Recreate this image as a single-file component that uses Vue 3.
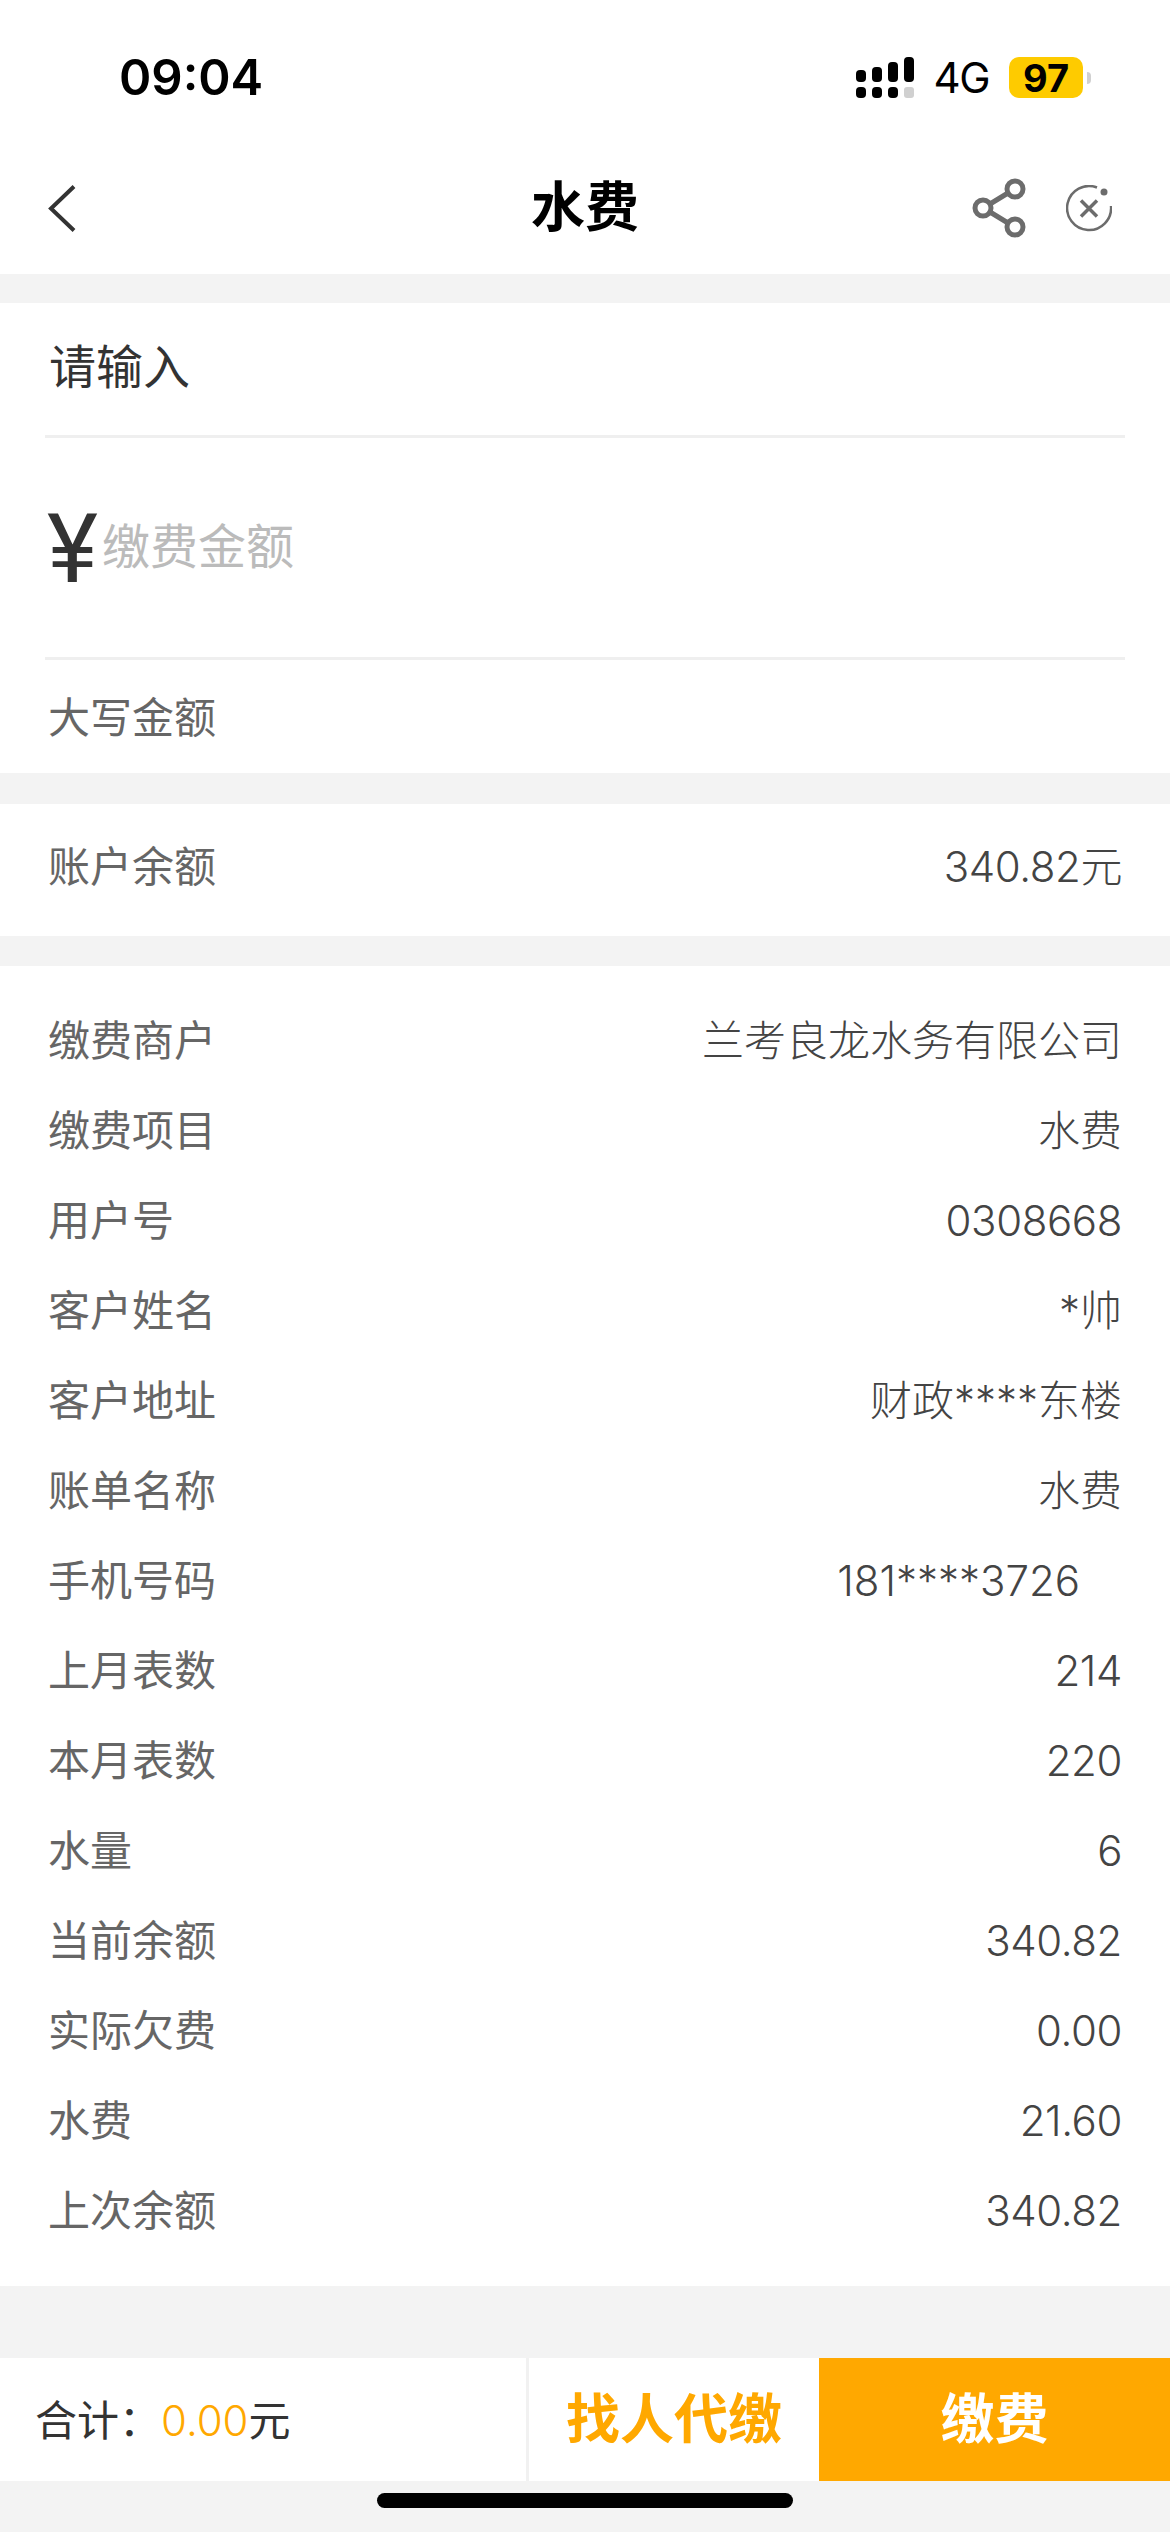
<script setup>
const rows = [
  ['缴费商户', '兰考良龙水务有限公司'],
  ['缴费项目', '水费'],
  ['用户号', '0308668', 'num'],
  ['客户姓名', '*帅'],
  ['客户地址', '财政****东楼'],
  ['账单名称', '水费'],
  ['手机号码', '181****3726', 'phone'],
  ['上月表数', '214', 'num'],
  ['本月表数', '220', 'num'],
  ['水量', '6', 'num'],
  ['当前余额', '340.82', 'num'],
  ['实际欠费', '0.00', 'num'],
  ['水费', '21.60', 'num'],
  ['上次余额', '340.82', 'num']
]
</script>

<template>
  <div class="page">
    <div class="status">
      <span class="time">09:04</span>
      <div class="status-right">
        <svg class="signal" width="58" height="41" viewBox="0 0 58 41">
          <g fill="#000">
            <rect x="0" y="13" width="10" height="12" rx="4" />
            <rect x="16" y="10" width="10" height="15" rx="4" />
            <rect x="32" y="5" width="10" height="20" rx="4" />
            <rect x="48" y="0" width="10" height="25" rx="4" />
            <rect x="0" y="30" width="10" height="11" rx="4" />
            <rect x="16" y="30" width="10" height="11" rx="4" />
            <rect x="32" y="30" width="10" height="11" rx="4" />
          </g>
          <rect x="48" y="30" width="10" height="11" rx="3" fill="#d0d0d0" />
        </svg>
        <span class="net">4G</span>
        <div class="battery"><span>97</span></div>
        <span class="nub"></span>
      </div>
    </div>

    <div class="nav">
      <svg class="back" width="28" height="47" viewBox="0 0 28 47">
        <path d="M26 1.500 L3 23.500 L26 45.500" fill="none" stroke="#333" stroke-width="4" />
      </svg>
      <span class="title">水费</span>
      <div class="nav-icons">
        <svg width="54" height="60" viewBox="0 0 54 60">
          <g fill="none" stroke="#6c6c6c" stroke-width="5">
            <circle cx="43" cy="11" r="8" />
            <circle cx="11" cy="30" r="8" />
            <circle cx="43" cy="49" r="8" />
            <path d="M18 26 L36 15 M18 34 L36 45" />
          </g>
        </svg>
        <svg width="46" height="47" viewBox="0 0 46 47">
          <path d="M31 2.500 A22 22 0 1 0 45 21" fill="none" stroke="#6c6c6c" stroke-width="2.500" />
          <circle cx="38" cy="7" r="3.500" fill="#6c6c6c" />
          <path d="M15 15.500 L31 31.500 M31 15.500 L15 31.500" fill="none" stroke="#6c6c6c" stroke-width="3.500" />
        </svg>
      </div>
    </div>

    <section class="card input-card">
      <div class="input-line">请输入</div>
      <div class="amount-line">
        <span class="yen">¥</span>
        <span class="placeholder">缴费金额</span>
      </div>
      <div class="caps">大写金额</div>
    </section>

    <section class="card balance">
      <span class="label">账户余额</span>
      <span class="value num">340.82元</span>
    </section>

    <section class="card details">
      <div v-for="row in rows" :key="row[0]" class="row">
        <span class="label">{{ row[0] }}</span>
        <span class="value" :class="row[2]">{{ row[1] }}</span>
      </div>
    </section>

    <div class="footer">
      <div class="total">合计：<em>0.00</em>元</div>
      <div class="proxy">找人代缴</div>
      <div class="pay">缴费</div>
    </div>
    <div class="home-wrap"><div class="home"></div></div>
  </div>
</template>

<style>
html, body { margin: 0; background: #f3f3f3; }
</style>

<style scoped>
.page {
  width: 1170px;
  height: 2532px;
  background: #f3f3f3;
  font-family: Inter, "Noto Sans CJK SC", sans-serif;
  display: flex;
  flex-direction: column;
  overflow: hidden;
}
.status {
  height: 142px;
  flex: none;
  background: #fff;
  display: flex;
  align-items: flex-start;
  justify-content: space-between;
  padding: 48px 79px 0 119px;
  box-sizing: border-box;
}
.time {
  font-weight: 600;
  font-size: 49px;
  line-height: 60px;
  color: #000;
}
.status-right {
  display: flex;
  align-items: flex-start;
  padding-top: 9px;
}
.net {
  font-size: 42px;
  line-height: 42px;
  letter-spacing: -1.500px;
  margin-left: 20px;
  color: #000;
}
.battery {
  width: 74px;
  height: 41px;
  margin-left: 20px;
  border-radius: 10px;
  background: #fecb00;
  display: flex;
  align-items: center;
  justify-content: center;
}
.battery span {
  font-weight: 700;
  font-size: 38px;
  color: #000;
}
.nub {
  width: 4px;
  height: 12px;
  margin: 15px 0 0 4px;
  border-radius: 0 6px 6px 0;
  background: #d0d0d0;
}
.nav {
  height: 132px;
  flex: none;
  background: #fff;
  position: relative;
  display: flex;
  align-items: center;
  justify-content: space-between;
  padding: 0 58px 0 48px;
  box-sizing: border-box;
}
.title {
  position: absolute;
  left: 0;
  right: 0;
  top: 36px;
  text-align: center;
  font-size: 54px;
  line-height: 60px;
  font-weight: 700;
  color: #000;
}
.nav-icons {
  display: flex;
  align-items: center;
  gap: 40px;
}
.card { background: #fff; }
.input-card {
  margin-top: 29px;
  height: 470px;
  flex: none;
  padding: 0 45px;
  box-sizing: border-box;
}
.input-line {
  height: 135px;
  box-sizing: border-box;
  padding: 37px 4px 0;
  border-bottom: 3px solid #efefef;
  font-size: 47px;
  line-height: 54px;
  color: #333;
}
.amount-line {
  height: 222px;
  box-sizing: border-box;
  border-bottom: 3px solid #efefef;
  display: flex;
  align-items: center;
  padding: 0 0 0 2px;
}
.yen {
  font-family: Roboto, sans-serif;
  font-size: 97px;
  line-height: 100px;
  font-weight: 400;
  color: #333;
  margin-top: 2px;
}
.placeholder {
  font-size: 48px;
  line-height: 60px;
  color: #bbb;
  margin-left: 4px;
  margin-bottom: 2px;
}
.caps {
  font-size: 42px;
  line-height: 48px;
  color: #666;
  padding: 34px 3px 0;
}
.balance {
  margin-top: 31px;
  height: 132px;
  flex: none;
  padding: 0 48px 6px;
  box-sizing: border-box;
  display: flex;
  align-items: center;
  justify-content: space-between;
}
.details {
  margin-top: 30px;
  flex: none;
  padding: 30px 48px;
}
.row {
  height: 90px;
  display: flex;
  align-items: center;
  justify-content: space-between;
}
.label {
  font-size: 42px;
  line-height: 60px;
  color: #666;
}
.value {
  font-size: 42px;
  line-height: 60px;
  font-weight: 300;
  color: #444;
}
.value.num { letter-spacing: -0.400px; }
.value.phone { margin-right: 42px; }
.footer {
  margin-top: 72px;
  height: 123px;
  flex: none;
  display: flex;
  background: #fff;
}
.total {
  width: 529px;
  box-sizing: border-box;
  border-right: 3px solid #f1f1f1;
  padding: 3px 0 0 35px;
  font-size: 42px;
  line-height: 120px;
  color: #333;
}
.total em {
  font-style: normal;
  font-weight: 300;
  color: #ffa800;
}
.proxy {
  width: 290px;
  text-align: center;
  font-size: 54px;
  font-weight: 700;
  line-height: 123px;
  color: #ffa800;
}
.pay {
  flex: 1;
  background: #ffa800;
  text-align: center;
  font-size: 54px;
  font-weight: 700;
  line-height: 123px;
  color: #fff;
}
.home-wrap {
  padding-top: 12px;
  display: flex;
  justify-content: center;
}
.home {
  width: 416px;
  height: 15px;
  border-radius: 8px;
  background: #000;
}
</style>
